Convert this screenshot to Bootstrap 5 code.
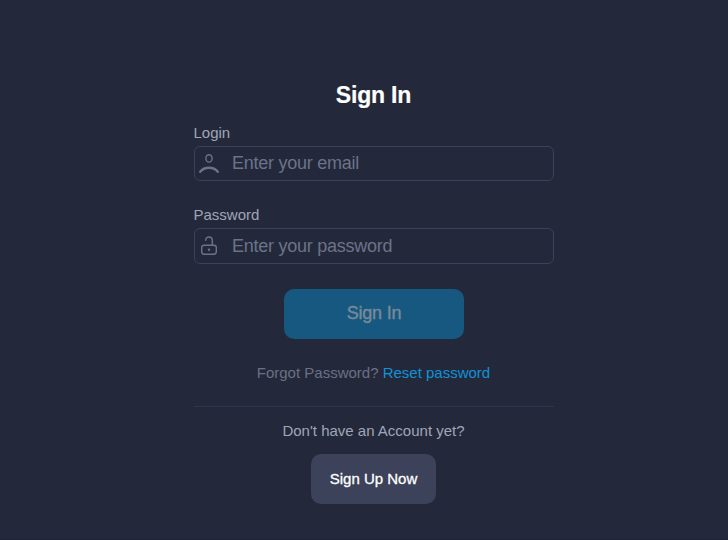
<!DOCTYPE html>
<html lang="en">
<head>
  <meta charset="UTF-8">
  <meta name="viewport" content="width=device-width, initial-scale=1">
  <title>Sign In</title>
  <link rel="stylesheet" href="https://cdn.jsdelivr.net/npm/bootstrap@5.3.3/dist/css/bootstrap.min.css">
  <style>
    body {
      background: #23293a;
      color: #a1a5b7;
      font-family: "Liberation Sans", Arial, sans-serif;
      font-size: 15px;
      line-height: 20px;
      height: 540px;
      overflow: hidden;
      border-bottom: 1px solid #1f2338;
    }
    .login-panel { width: 360px; margin-left: 194px; padding-top: 80px; }
    .login-title { font-size: 23px; line-height: 30px; font-weight: 700; letter-spacing: -.2px; margin: 0 1px 13px 0; -webkit-text-stroke: .2px; }
    .form-label { line-height: 20px; margin-bottom: 3px; margin-left: -.5px; }
    .login-field { height: 35px; border: 1px solid #3c4257; border-radius: 6px; color: #6b738a; }
    .login-field-tall { height: 36px; }
    .login-field .form-control { color: #6b738a; font-size: 18px; line-height: 24px; letter-spacing: -.26px; }
    .login-field .form-control::placeholder { color: #6b738a; }
    #email { margin-bottom: 2px; }
    .field-icon { width: 20px; height: 20px; margin-left: 4px; margin-right: 13px; flex: none; }
    .signin-row { margin-top: 25px; }
    .btn-signin, .btn-signin:disabled {
      width: 180px; height: 50px; border: 0; border-radius: 10px;
      background: #165880; color: #788a99; font-size: 18px; line-height: 24px; opacity: 1;
      letter-spacing: -.2px;
      padding: 0 0 2px;
      -webkit-text-stroke: .4px;
    }
    .forgot-text { color: #6b7085; margin-right: 1px; }
    .forgot-text a { color: #1292d6; }
    .login-divider { border-top: 1px solid #2f354a; margin-top: 23px; }
    .signup-text { margin: 14px 1px 13px 0; }
    .signup-row { padding-right: 1px; }
    .btn-signup, .btn-signup:hover {
      width: 125px; height: 50px; border: 0; border-radius: 10px;
      background: #3b4259; color: #fff; font-size: 15px;
      -webkit-text-stroke: .3px;
    }
  </style>
</head>
<body>
<main class="login-panel">
  <h1 class="login-title text-white text-center">Sign In</h1>

  <form id="login-form">
    <label for="email" class="form-label d-block">Login</label>
    <div class="login-field d-flex align-items-center">
      <svg class="field-icon" viewBox="0 0 20 20" fill="none" stroke="currentColor" stroke-linecap="round">
        <ellipse cx="10" cy="4.4" rx="3.1" ry="3.7" stroke-width="1.4"/>
        <path d="M1.2 17.8C5.4 12.4 14.6 12.4 18.8 17.8" stroke-width="2.3"/>
      </svg>
      <input type="email" class="form-control border-0 bg-transparent shadow-none p-0" id="email" placeholder="Enter your email">
    </div>

    <label for="password" class="form-label d-block mt-4">Password</label>
    <div class="login-field login-field-tall d-flex align-items-center">
      <svg class="field-icon" viewBox="0 0 20 20" fill="none" stroke="currentColor" stroke-width="1.4" stroke-linecap="round">
        <rect x="2.7" y="9.2" width="14.6" height="9" rx="2.4"/>
        <path d="M6.7 4.3C6.7 2.2 8.1 1 10 1s3.3 1.3 3.3 3.3v4.9"/>
        <circle cx="10" cy="13.8" r="1.2" fill="currentColor" stroke="none"/>
      </svg>
      <input type="password" class="form-control border-0 bg-transparent shadow-none p-0" id="password" placeholder="Enter your password">
    </div>

    <div class="signin-row d-flex justify-content-center">
      <button type="submit" class="btn btn-signin" disabled>Sign In</button>
    </div>
  </form>

  <div class="forgot-text text-center mt-4">Forgot Password? <a href="#" class="text-decoration-none">Reset password</a></div>
  <div class="login-divider"></div>
  <div class="signup-text text-center">Don't have an Account yet?</div>
  <div class="signup-row d-flex justify-content-center">
    <a href="#" class="btn btn-signup p-0 d-flex align-items-center justify-content-center">Sign Up Now</a>
  </div>
</main>

<script src="https://cdn.jsdelivr.net/npm/bootstrap@5.3.3/dist/js/bootstrap.bundle.min.js"></script>
</body>
</html>
